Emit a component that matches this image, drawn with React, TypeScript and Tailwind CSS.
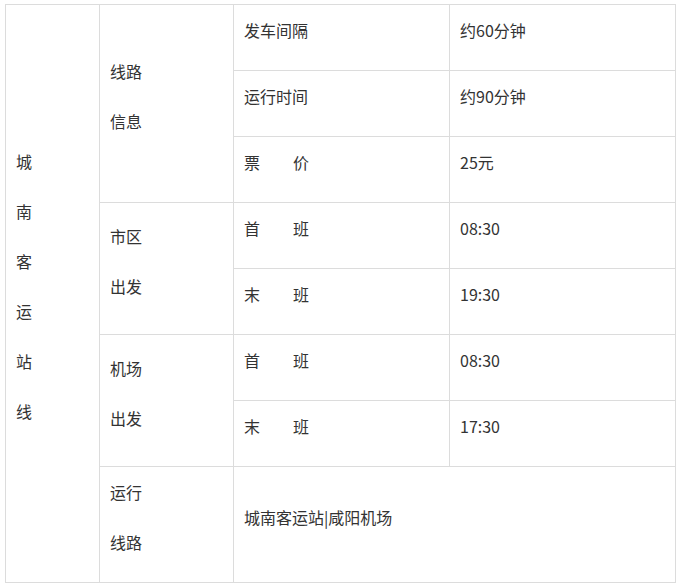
import React from "react";

const cell = "border border-[#dcdcdc] align-middle px-[10px] pb-[15px] pt-0";

const Spaced = ({ a, b }: { a: string; b: string }) => (
  <span>
    {a}
    <span className="inline-block w-[33px]" />
    {b}
  </span>
);

const Stack = ({ lines }: { lines: string[] }) => (
  <div className="leading-[50px]">
    {lines.map((l, i) => (
      <div key={i}>{l}</div>
    ))}
  </div>
);

export default function App() {
  return (
    <div
      className="bg-white w-[680px] h-[587px] pt-[4px] pl-[5px] text-[16px] text-[#333333]"
      style={{ fontFamily: '"Noto Sans CJK SC", "Noto Sans", sans-serif' }}
    >
      <table className="table-fixed border-collapse w-[670px]">
        <colgroup>
          <col className="w-[94px]" />
          <col className="w-[134px]" />
          <col className="w-[216px]" />
          <col className="w-[226px]" />
        </colgroup>
        <tbody>
          <tr className="h-[66px]">
            <td rowSpan={8} className={cell}>
              <Stack lines={["城", "南", "客", "运", "站", "线"]} />
            </td>
            <td rowSpan={3} className={cell}>
              <Stack lines={["线路", "信息"]} />
            </td>
            <td className={cell}>发车间隔</td>
            <td className={cell}>约60分钟</td>
          </tr>
          <tr className="h-[66px]">
            <td className={cell}>运行时间</td>
            <td className={cell}>约90分钟</td>
          </tr>
          <tr className="h-[66px]">
            <td className={cell}>
              <Spaced a="票" b="价" />
            </td>
            <td className={cell}>25元</td>
          </tr>
          <tr className="h-[66px]">
            <td rowSpan={2} className={cell}>
              <Stack lines={["市区", "出发"]} />
            </td>
            <td className={cell}>
              <Spaced a="首" b="班" />
            </td>
            <td className={cell}>08:30</td>
          </tr>
          <tr className="h-[66px]">
            <td className={cell}>
              <Spaced a="末" b="班" />
            </td>
            <td className={cell}>19:30</td>
          </tr>
          <tr className="h-[66px]">
            <td rowSpan={2} className={cell}>
              <Stack lines={["机场", "出发"]} />
            </td>
            <td className={cell}>
              <Spaced a="首" b="班" />
            </td>
            <td className={cell}>08:30</td>
          </tr>
          <tr className="h-[66px]">
            <td className={cell}>
              <Spaced a="末" b="班" />
            </td>
            <td className={cell}>17:30</td>
          </tr>
          <tr className="h-[116px]">
            <td className={cell}>
              <Stack lines={["运行", "线路"]} />
            </td>
            <td colSpan={2} className={cell}>
              城南客运站|咸阳机场
            </td>
          </tr>
        </tbody>
      </table>
    </div>
  );
}
